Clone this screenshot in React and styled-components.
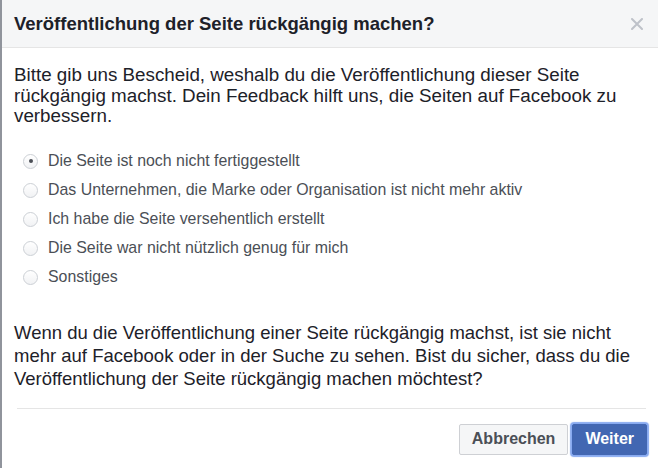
import { useState } from 'react'
import styled, { createGlobalStyle } from 'styled-components'

const GlobalStyle = createGlobalStyle`
    html, body {
        margin: 0;
        padding: 0;
        background: #fff;
    }
    body {
        font-family: "Liberation Sans", Arial, sans-serif;
    }
`

const Dialog = styled.div`
    width: 658px;
    height: 468px;
    box-sizing: border-box;
    border-left: 2px solid #90949c;
    background: #fff;
    display: flex;
    flex-direction: column;
`

const Header = styled.div`
    height: 48px;
    box-sizing: border-box;
    display: flex;
    align-items: center;
    justify-content: space-between;
    padding: 0 14px 0 12px;
    background: #f5f6f7;
    border-bottom: 1px solid #e5e5e5;
`

const Title = styled.h2`
    margin: 0;
    font-size: 18.5px;
    font-weight: bold;
    color: #1d2129;
`

const Close = styled.button`
    border: 0;
    background: none;
    padding: 0;
    width: 14px;
    height: 14px;
    display: flex;
    align-items: center;
    justify-content: center;
    cursor: pointer;
`

const Body = styled.div`
    padding: 17px 11px 0 12px;
    display: flex;
    flex-direction: column;
`

const Text = styled.p`
    margin: 0;
    font-size: ${ ( { $size } ) => $size || '18.5px' };
    line-height: ${ ( { $lh } ) => $lh || '20.5px' };
    color: #1d2129;
`

const Options = styled.div`
    margin: 20px 0 29px 0;
    display: flex;
    flex-direction: column;
`

const Option = styled.label`
    height: 29px;
    display: flex;
    align-items: center;
    gap: 10px;
    padding-left: 9px;
    font-size: 15.9px;
    color: #4b4f56;
    cursor: pointer;
`

const Radio = styled.span`
    width: 13px;
    height: 13px;
    border-radius: 50%;
    border: 1px solid #ccd0d5;
    background: linear-gradient( #fff, #f1f2f4 );
    display: flex;
    align-items: center;
    justify-content: center;
    flex-shrink: 0;

    &::after {
        content: '';
        width: 4px;
        height: 4px;
        border-radius: 50%;
        background: ${ ( { $checked } ) => $checked ? '#4b4f56' : 'transparent' };
    }
`

const Divider = styled.hr`
    margin: 18px 1px 15px 3px;
    border: 0;
    border-top: 1px solid #e5e5e5;
`

const Footer = styled.div`
    display: flex;
    justify-content: flex-end;
    gap: 4px;
`

const Button = styled.button`
    height: 31px;
    box-sizing: border-box;
    padding: 0 ${ ( { $primary } ) => $primary ? '12px' : '12px' };
    font-family: "Liberation Sans", Arial, sans-serif;
    font-size: 16px;
    font-weight: bold;
    border-radius: 2px;
    cursor: pointer;
    border: 1px solid ${ ( { $primary } ) => $primary ? '#4267b2' : '#ced0d4' };
    background: ${ ( { $primary } ) => $primary ? '#4267b2' : '#f5f6f7' };
    color: ${ ( { $primary } ) => $primary ? '#fff' : '#4b4f56' };
    box-shadow: ${ ( { $primary } ) => $primary ? '0 0 1px 2px #88aaf0' : 'none' };
`

const reasons = [
    `Die Seite ist noch nicht fertiggestellt`,
    `Das Unternehmen, die Marke oder Organisation ist nicht mehr aktiv`,
    `Ich habe die Seite versehentlich erstellt`,
    `Die Seite war nicht nützlich genug für mich`,
    `Sonstiges`,
]

export default function App() {

    const [ selected, set_selected ] = useState( 0 )

    return <>
        <GlobalStyle />
        <Dialog>

            <Header>
                <Title>Veröffentlichung der Seite rückgängig machen?</Title>
                <Close aria-label="Schließen">
                    <svg width="12" height="12" viewBox="0 0 12 12">
                        <path d="M1 1 L11 11 M11 1 L1 11" stroke="#bec2c9" strokeWidth="2" strokeLinecap="round" />
                    </svg>
                </Close>
            </Header>

            <Body>
                <Text $size="18.8px">
                    Bitte gib uns Bescheid, weshalb du die Veröffentlichung dieser Seite rückgängig machst. Dein Feedback hilft uns, die Seiten auf Facebook zu verbessern.
                </Text>

                <Options>
                    { reasons.map( ( reason, i ) => <Option key={ reason } onClick={ () => set_selected( i ) }>
                        <Radio $checked={ selected === i } />
                        { reason }
                    </Option> ) }
                </Options>

                <Text $lh="23px">
                    Wenn du die Veröffentlichung einer Seite rückgängig machst, ist sie nicht mehr auf Facebook oder in der Suche zu sehen. Bist du sicher, dass du die Veröffentlichung der Seite rückgängig machen möchtest?
                </Text>

                <Divider />

                <Footer>
                    <Button>Abbrechen</Button>
                    <Button $primary>Weiter</Button>
                </Footer>
            </Body>

        </Dialog>
    </>

}
